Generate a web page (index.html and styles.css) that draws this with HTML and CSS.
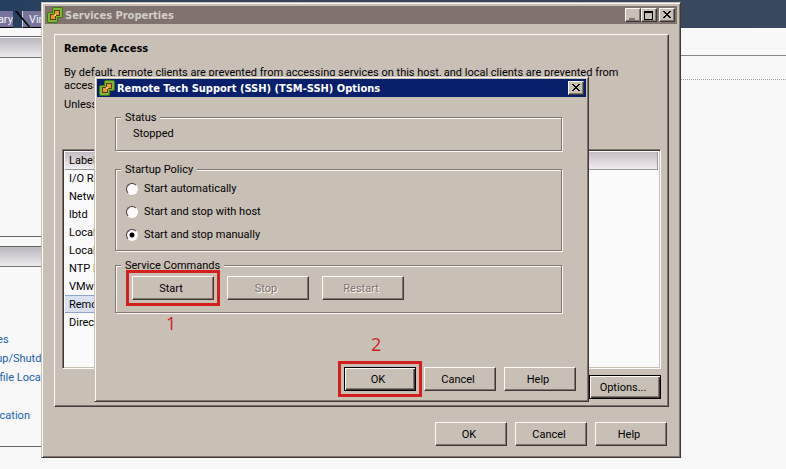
FILE: index.html
```html
<!DOCTYPE html>
<html lang="en">
<head>
    <meta charset="UTF-8">
    <meta name="viewport" content="width=device-width, initial-scale=1.0">
    <title>Services Properties</title>
    <link rel="stylesheet" href="styles.css">
</head>
<body>
    <svg class="defs" width="0" height="0">
        <symbol id="vm-logo" viewBox="0 0 16 16">
            <rect x="5" y="0" width="11" height="11" rx="2" fill="#3c7a10"/>
            <rect x="0" y="5" width="11" height="11" rx="2" fill="#3c7a10"/>
            <rect x="6" y="1" width="9" height="9" rx="1" fill="#7fb832"/>
            <rect x="1" y="6" width="9" height="9" rx="1" fill="#7fb832"/>
            <rect x="7" y="3" width="6" height="6" fill="#5a3a10"/>
            <rect x="3" y="7" width="6" height="6" fill="#5a3a10"/>
            <rect x="8" y="4" width="4" height="4" fill="#e89a28"/>
            <rect x="4" y="8" width="4" height="4" fill="#e89a28"/>
            <rect x="7" y="7" width="2" height="2" fill="#f8d060"/>
        </symbol>
        <symbol id="close" viewBox="0 0 10 8">
            <path d="M1 0h2v1h1v1h2v-1h1v-1h2v1h-1v1h-1v1h-1v1h1v1h1v1h1v1h-2v-1h-1v-1h-2v1h-1v1h-2v-1h1v-1h1v-1h1v-1h-1v-1h-1v-1h-1z" fill="#000"/>
        </symbol>
    </svg>

    <!-- Client window behind the dialogs -->
    <div class="client">
        <header class="topbar">
            <nav class="tabs">
                <a href="#" class="tab">Summary</a>
                <a href="#" class="tab">Virtual Machines</a>
            </nav>
        </header>
        <div class="page">
            <aside class="side">
                <section class="card">
                    <div class="card-head"></div>
                </section>
                <section class="card card-links">
                    <div class="card-head"></div>
                    <ul>
                        <li><a href="#">Authentication Services</a></li>
                        <li><a href="#">Virtual Machine Startup/Shutdown</a></li>
                        <li><a href="#">Virtual Machine Swapfile Location</a></li>
                        <li></li>
                        <li><a href="#">System Resource Allocation</a></li>
                    </ul>
                </section>
            </aside>
            <main class="rest">
                <div class="rule"></div>
                <div class="rule dotted"></div>
            </main>
        </div>
    </div>

    <!-- Services Properties -->
    <section class="window services">
        <div class="titlebar inactive">
            <svg class="logo"><use href="#vm-logo"/></svg>
            <h1>Services Properties</h1>
            <div class="controls">
                <button class="ctl" aria-label="Minimize"><svg width="10" height="9"><rect x="1" y="7" width="6" height="2" fill="#80756f"/></svg></button>
                <button class="ctl" aria-label="Maximize"><svg width="10" height="9"><path d="M0 0h9v9h-9z M1 2v6h7v-6z" fill="#000" fill-rule="evenodd"/></svg></button>
                <button class="ctl ctl-close" aria-label="Close"><svg width="10" height="8"><use href="#close"/></svg></button>
            </div>
        </div>
        <div class="panel">
            <h2>Remote Access</h2>
            <p>By default, remote clients are prevented from accessing services on this host, and local clients are prevented from accessing services on remote hosts.</p>
            <p class="note">Unless configured otherwise, daemons will start automatically.</p>
            <div class="list">
                <table>
                    <thead>
                        <tr><th>Label</th></tr>
                    </thead>
                    <tbody>
                        <tr><td>I/O Redirector (Active Directory Service)</td></tr>
                        <tr><td>Network Login Server (Active Directory Service)</td></tr>
                        <tr><td>lbtd</td></tr>
                        <tr><td>Local Security Authentication Server</td></tr>
                        <tr><td>Local Tech Support</td></tr>
                        <tr><td>NTP Daemon</td></tr>
                        <tr><td>VMware vCenter Agent</td></tr>
                        <tr class="selected"><td>Remote Tech Support (SSH)</td></tr>
                        <tr><td>Direct Console UI</td></tr>
                    </tbody>
                </table>
            </div>
            <div class="panel-foot">
                <button class="btn default">Options...</button>
            </div>
        </div>
        <div class="actions">
            <button class="btn">OK</button>
            <button class="btn">Cancel</button>
            <button class="btn">Help</button>
        </div>
    </section>

    <!-- SSH options -->
    <form class="window options" onsubmit="return false">
        <div class="titlebar">
            <svg class="logo"><use href="#vm-logo"/></svg>
            <h1>Remote Tech Support (SSH) (TSM-SSH) Options</h1>
            <div class="controls">
                <button type="button" class="ctl" aria-label="Close"><svg width="10" height="8"><use href="#close"/></svg></button>
            </div>
        </div>
        <div class="groups">
            <fieldset class="status">
                <legend>Status</legend>
                <p>Stopped</p>
            </fieldset>
            <fieldset>
                <legend>Startup Policy</legend>
                <div class="policy">
                    <label><input type="radio" name="policy">Start automatically</label>
                    <label><input type="radio" name="policy">Start and stop with host</label>
                    <label><input type="radio" name="policy" checked>Start and stop manually</label>
                </div>
            </fieldset>
            <fieldset>
                <legend>Service Commands</legend>
                <div class="commands">
                    <div class="marked">
                        <button type="button" class="btn">Start</button>
                        <span class="step step-one">1</span>
                    </div>
                    <button type="button" class="btn" disabled>Stop</button>
                    <button type="button" class="btn" disabled>Restart</button>
                </div>
            </fieldset>
        </div>
        <div class="actions">
            <div class="marked">
                <button class="btn default">OK</button>
                <span class="step step-two">2</span>
            </div>
            <button type="button" class="btn">Cancel</button>
            <button type="button" class="btn">Help</button>
        </div>
    </form>
</body>
</html>
```
FILE: styles.css
```css
* {
    margin: 0;
    padding: 0;
    box-sizing: border-box;
}

:root {
    --face: #c8bfb5;
    --light: #fffaf5;
    --shadow: #80756f;
    --dark: #3f3836;
    --red: #d41f1f;
}

body {
    background: #f8f8f8;
    color: #000;
    font: 11px/13px Tahoma, Roboto, sans-serif;
    overflow: hidden;
}

button, input {
    font: inherit;
    color: inherit;
}

.defs {
    position: absolute;
}

/* client window */
.client {
    min-height: 100vh;
    display: flex;
    flex-direction: column;
}

.topbar {
    height: 28px;
    padding-top: 11px;
    background: linear-gradient(90deg, #24405e, #36465e 30%, #38485f);
}

.tabs {
    display: flex;
    gap: 9px;
    margin-left: -41px;
}

.tab {
    position: relative;
    height: 17px;
    padding: 2px 0 0 6px;
    background: #77749a;
    border-left: 1px solid #d8d8e4;
    border-bottom: 1px solid #000;
    color: #f4f4fa;
    text-decoration: none;
    white-space: nowrap;
}

/* slanted edge between two tabs */
.tab:not(:last-child)::after {
    content: "";
    position: absolute;
    z-index: 1;
    top: 0;
    left: 100%;
    width: 2px;
    height: 16px;
    border-right: 2px solid #000;
    transform: skewX(40deg);
    transform-origin: top left;
}

.page {
    flex: 1;
    display: flex;
}

.side {
    width: 60px;
    padding-top: 8px;
}

.card {
    height: 201px;
    border-top: 1px solid #666;
    border-bottom: 1px solid #666;
    padding-top: 1px;
    margin-bottom: 9px;
}

.card-head {
    height: 20px;
    background: linear-gradient(#bdb8c0, #ece8ec);
    border-bottom: 1px solid #777;
}

.card-links {
    padding-top: 0;
}

.card ul {
    list-style: none;
    padding-top: 66px;
    margin-left: -107px;
}

.card li {
    height: 19px;
    white-space: nowrap;
}

.card a {
    color: #1560b0;
    text-decoration: none;
}

.rest {
    flex: 1;
    padding-top: 27px;
}

.rule {
    height: 24px;
    border-top: 1px solid #888;
}

.rule.dotted {
    border-top: 1px dotted #999;
}

/* windows */
.window {
    position: absolute;
    background: var(--face);
    border: 1px solid;
    border-color: var(--face) var(--dark) var(--dark) var(--face);
    box-shadow: inset 1px 1px var(--light), inset -1px -1px var(--shadow);
}

.services {
    left: 41px;
    top: 2px;
    width: 640px;
    padding: 3px;
}

.options {
    left: 94px;
    top: 76px;
    width: 495px;
    padding: 2px;
}

.titlebar {
    display: flex;
    align-items: center;
    height: 18px;
    padding: 0 2px;
    background: #08206b;
    color: #fff;
}

.titlebar.inactive {
    background: #80736f;
    color: #d6cec6;
}

.titlebar h1,
.panel h2 {
    margin-left: 2px;
    font: bold 11px/13px Tahoma, "DejaVu Sans Condensed", sans-serif;
}

.titlebar h1 {
    flex: 1;
}

.logo {
    width: 16px;
    height: 16px;
}

.controls {
    display: flex;
}

.ctl {
    display: flex;
    align-items: center;
    justify-content: center;
    width: 16px;
    height: 14px;
    background: var(--face);
    border: 1px solid;
    border-color: var(--light) var(--dark) var(--dark) var(--light);
    box-shadow: inset -1px -1px var(--shadow);
}

.ctl-close {
    margin-left: 2px;
}

.btn {
    width: 72px;
    height: 24px;
    padding: 0 4px 0 0;
    background: var(--face);
    border: 1px solid;
    border-color: var(--light) var(--dark) var(--dark) var(--light);
    box-shadow: inset -1px -1px var(--shadow);
}

.btn.default {
    border-color: #000;
    box-shadow: inset 1px 1px var(--light), inset -1px -1px var(--dark), inset -2px -2px var(--shadow);
}

.btn:disabled {
    color: var(--shadow);
    text-shadow: 1px 1px var(--light);
}

.actions {
    display: flex;
    justify-content: flex-end;
    gap: 8px;
}

/* services properties */
.panel {
    margin: 10px 8px 15px 9px;
    padding: 7px;
    border: 1px solid;
    border-color: var(--light) var(--dark) var(--dark) var(--light);
    box-shadow: inset -1px -1px var(--shadow);
}

.panel p {
    margin: 11px 36px 0 2px;
}

.panel .note {
    margin-top: 6px;
}

.list {
    height: 220px;
    margin-top: 38px;
    background: #fafafa;
    border: 1px solid;
    border-color: var(--shadow) var(--light) var(--light) var(--shadow);
    box-shadow: inset 1px 1px var(--dark), inset -1px -1px var(--face);
    padding: 2px;
}

.list table {
    width: 100%;
    border-collapse: collapse;
}

.list th {
    height: 17px;
    padding-left: 4px;
    background: linear-gradient(#c4bcc2, #f0ecf0);
    border-right: 1px solid #999;
    border-bottom: 1px solid #999;
    font-weight: normal;
    text-align: left;
}

.list td {
    height: 18px;
    padding-left: 4px;
}

.list .selected {
    background: linear-gradient(#d8e0f2, #d8e0f2) no-repeat 0 0 / 50% 100%;
    box-shadow: inset 0 0 0 transparent;
}

.list .selected td {
    background: linear-gradient(#8ea4cc, #8ea4cc) no-repeat 0 0 / 50% 1px,
                linear-gradient(#8ea4cc, #8ea4cc) no-repeat 0 100% / 50% 1px;
}

.panel-foot {
    display: flex;
    justify-content: flex-end;
    margin-top: 6px;
}

.services .actions {
    padding: 0 10px 8px;
}

/* ssh options */
.groups {
    display: flex;
    flex-direction: column;
    gap: 8px;
    padding: 14px 24px 0 18px;
}

fieldset {
    border: 1px solid var(--shadow);
    box-shadow: 1px 1px var(--light), inset 1px 1px var(--light);
}

legend {
    margin-left: 5px;
    padding: 0 4px;
    background: var(--face);
}

.status {
    margin-bottom: 4px;
}

.status p {
    padding: 3px 17px 10px;
}

.policy {
    display: flex;
    flex-direction: column;
    gap: 10px;
    padding: 6px 10px 9px;
}

.policy label {
    display: flex;
    align-items: center;
    height: 13px;
}

.policy input {
    appearance: none;
    width: 12px;
    height: 12px;
    margin-right: 6px;
    border: 1px solid;
    border-color: var(--dark) var(--light) var(--light) var(--dark);
    border-radius: 50%;
    background: #fff;
}

.policy input:checked {
    background: radial-gradient(#000 2px, #fff 3px);
}

.commands {
    display: flex;
    gap: 13px;
    padding: 4px 16px 12px;
}

.commands .btn {
    width: 82px;
}

.marked {
    position: relative;
    display: flex;
}

/* red frame drawn round the button to press */
.marked::before {
    content: "";
    position: absolute;
    inset: -6px;
    border: 3px solid var(--red);
}

.step {
    position: absolute;
    color: var(--red);
    font: 18px/20px "Open Sans", sans-serif;
}

.step-one {
    left: 34px;
    top: 37px;
}

.step-two {
    left: 27px;
    bottom: 37px;
}

.options .actions {
    padding: 54px 10px 8px;
}
```
